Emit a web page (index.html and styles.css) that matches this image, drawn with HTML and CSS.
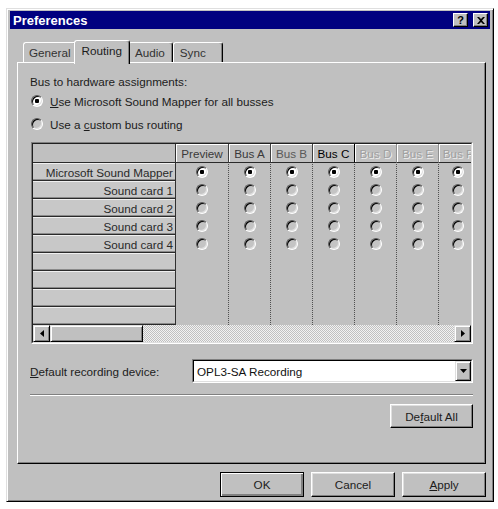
FILE: index.html
```html
<!DOCTYPE html>
<html lang="en">

<head>
    <meta charset="UTF-8">
    <meta name="viewport" content="width=device-width, initial-scale=1.0">
    <title>Preferences</title>
    <link rel="stylesheet" href="styles.css">
</head>

<body>
    <div class="dialog">
        <div class="titlebar">
            <span class="title">Preferences</span>
            <div class="title-buttons">
                <span class="tbtn help">?</span>
                <span class="tbtn">
                    <svg width="8" height="7" viewBox="0 0 8 7"><path d="M0 0h2l2 2 2-2h2L5 3.5 8 7H6L4 5 2 7H0l3-3.5z" fill="#000"/></svg>
                </span>
            </div>
        </div>

        <div class="tabs">
            <div class="tab">General</div>
            <div class="tab active">Routing</div>
            <div class="tab audio">Audio</div>
            <div class="tab sync">Sync</div>
        </div>

        <div class="panel">
            <div class="caption">Bus to hardware assignments:</div>
            <div class="option first"><span class="radio on"></span><span><u>U</u>se Microsoft Sound Mapper for all busses</span></div>
            <div class="option"><span class="radio"></span><span>Use a <u>c</u>ustom bus routing</span></div>

            <div class="routing">
                <div class="routing-inner">
                    <div class="routing-body">
                        <div class="names">
                            <div class="name head"></div>
                            <div class="name">Microsoft Sound Mapper</div>
                            <div class="name">Sound card 1</div>
                            <div class="name">Sound card 2</div>
                            <div class="name">Sound card 3</div>
                            <div class="name">Sound card 4</div>
                            <div class="name"></div>
                            <div class="name"></div>
                            <div class="name"></div>
                            <div class="name"></div>
                        </div>

                        <div class="bus preview">
                            <div class="bus-head">Preview</div>
                            <div class="cell"><span class="radio on"></span></div>
                            <div class="cell"><span class="radio"></span></div>
                            <div class="cell"><span class="radio"></span></div>
                            <div class="cell"><span class="radio"></span></div>
                            <div class="cell"><span class="radio"></span></div>
                        </div>
                        <div class="bus">
                            <div class="bus-head">Bus A</div>
                            <div class="cell"><span class="radio on"></span></div>
                            <div class="cell"><span class="radio"></span></div>
                            <div class="cell"><span class="radio"></span></div>
                            <div class="cell"><span class="radio"></span></div>
                            <div class="cell"><span class="radio"></span></div>
                        </div>
                        <div class="bus">
                            <div class="bus-head dim">Bus B</div>
                            <div class="cell"><span class="radio on"></span></div>
                            <div class="cell"><span class="radio"></span></div>
                            <div class="cell"><span class="radio"></span></div>
                            <div class="cell"><span class="radio"></span></div>
                            <div class="cell"><span class="radio"></span></div>
                        </div>
                        <div class="bus">
                            <div class="bus-head current">Bus C</div>
                            <div class="cell"><span class="radio on"></span></div>
                            <div class="cell"><span class="radio"></span></div>
                            <div class="cell"><span class="radio"></span></div>
                            <div class="cell"><span class="radio"></span></div>
                            <div class="cell"><span class="radio"></span></div>
                        </div>
                        <div class="bus">
                            <div class="bus-head off">Bus D</div>
                            <div class="cell"><span class="radio on"></span></div>
                            <div class="cell"><span class="radio"></span></div>
                            <div class="cell"><span class="radio"></span></div>
                            <div class="cell"><span class="radio"></span></div>
                            <div class="cell"><span class="radio"></span></div>
                        </div>
                        <div class="bus">
                            <div class="bus-head off">Bus E</div>
                            <div class="cell"><span class="radio on"></span></div>
                            <div class="cell"><span class="radio"></span></div>
                            <div class="cell"><span class="radio"></span></div>
                            <div class="cell"><span class="radio"></span></div>
                            <div class="cell"><span class="radio"></span></div>
                        </div>
                        <div class="bus last">
                            <div class="bus-head off">Bus F</div>
                            <div class="cell"><span class="radio on"></span></div>
                            <div class="cell"><span class="radio"></span></div>
                            <div class="cell"><span class="radio"></span></div>
                            <div class="cell"><span class="radio"></span></div>
                            <div class="cell"><span class="radio"></span></div>
                        </div>
                    </div>

                    <div class="hscroll">
                        <div class="sbtn">
                            <svg width="4" height="7" viewBox="0 0 4 7"><path d="M4 0v7L0 3.5z" fill="#000"/></svg>
                        </div>
                        <div class="thumb"></div>
                        <div class="track"></div>
                        <div class="sbtn">
                            <svg width="4" height="7" viewBox="0 0 4 7"><path d="M0 0v7l4-3.5z" fill="#000"/></svg>
                        </div>
                    </div>
                </div>
            </div>

            <div class="device-row">
                <span class="device-label"><u>D</u>efault recording device:</span>
                <div class="combo">
                    <div class="combo-inner">
                        <span class="combo-text">OPL3-SA Recording</span>
                        <span class="combo-btn">
                            <svg width="7" height="4" viewBox="0 0 7 4"><path d="M0 0h7L3.5 4z" fill="#000"/></svg>
                        </span>
                    </div>
                </div>
            </div>

            <div class="separator"></div>

            <div class="defaults">
                <button class="btn">De<u>f</u>ault All</button>
            </div>
        </div>

        <div class="footer">
            <button class="btn default">OK</button>
            <button class="btn">Cancel</button>
            <button class="btn"><u>A</u>pply</button>
        </div>
    </div>
</body>

</html>
```

FILE: styles.css
```css
body {
    margin: 0;
    background: #fff;
    font-family: "Liberation Sans", Arial, sans-serif;
    font-size: 11.7px;
    color: #1c1c1c;
}

u {
    text-decoration: underline;
    text-underline-offset: 1px;
}

.dialog {
    margin: 8px 0 0 6px;
    width: 488px;
    height: 494px;
    box-sizing: border-box;
    padding: 2px 3px;
    background: #c0c0c0;
    border: 1px solid;
    border-color: #dfdfdf #000 #000 #dfdfdf;
    box-shadow: inset 1px 1px #fff, inset -1px -1px #808080;
    display: flex;
    flex-direction: column;
}

/* title bar */
.titlebar {
    height: 18px;
    background: #000080;
    display: flex;
    align-items: center;
    justify-content: space-between;
    padding: 0 2px 0 3px;
}

.title {
    color: #fff;
    font-weight: bold;
    font-size: 13px;
}

.title-buttons {
    display: flex;
    gap: 5px;
}

.tbtn {
    width: 15px;
    height: 14px;
    box-sizing: border-box;
    background: #c0c0c0;
    border: 1px solid;
    border-color: #fff #000 #000 #fff;
    box-shadow: inset -1px -1px #808080;
    display: flex;
    align-items: center;
    justify-content: center;
    font-weight: bold;
    font-size: 11px;
    line-height: 1;
    color: #000;
}

/* tabs */
.tabs {
    display: flex;
    align-items: flex-end;
    margin: 11px 0 0 13px;
}

.tab {
    height: 20px;
    box-sizing: border-box;
    padding: 3px 5px 0;
    border: 1px solid;
    border-bottom: none;
    border-color: #fff #000 transparent #fff;
    border-radius: 3px 3px 0 0;
    box-shadow: inset -1px 0 #808080;
    color: #333;
}

.tab.active {
    height: 24px;
    margin: 0 -2px -2px -3px;
    padding: 3px 7px 0;
    background: #c0c0c0;
    position: relative;
    z-index: 1;
    color: #1c1c1c;
}

.tab.active + .tab {
    border-left-color: transparent;
}

.tab.audio {
    padding: 3px 7px 0 6px;
}

.tab.sync {
    padding: 3px 16px 0 6px;
}

/* panel */
.panel {
    margin: 0 4px 0 7px;
    padding: 12px 12px 35px;
    border: 1px solid;
    border-color: #fff #000 #000 #fff;
    box-shadow: inset -1px -1px #808080;
    display: flex;
    flex-direction: column;
}

.caption {
    line-height: 14px;
}

.option {
    display: flex;
    align-items: center;
    gap: 7px;
    height: 14px;
    margin-top: 9px;
    padding-left: 1px;
}

.option.first {
    margin-top: 5px;
}

.radio {
    width: 12px;
    height: 12px;
    box-sizing: border-box;
    border-radius: 50%;
    border: 1px solid;
    border-color: #5a5a5a #fff #fff #5a5a5a;
    box-shadow: inset 1px 1px #000, inset -1px -1px #e0e0e0;
    background: #c4c4c4;
    flex-shrink: 0;
}

.radio.on {
    background: radial-gradient(circle, #000 0 2px, #fff 2.5px);
}

/* routing grid */
.routing {
    margin: 11px 0 0 1px;
    width: 442px;
    box-sizing: border-box;
    border: 1px solid;
    border-color: #808080 #fff #fff #808080;
}

.routing-inner {
    border: 1px solid;
    border-color: #202020 #dfdfdf #dfdfdf #202020;
    overflow: hidden;
}

.routing-body {
    display: flex;
    height: 181px;
}

.names {
    width: 142px;
    flex-shrink: 0;
    border-right: 1px solid #303030;
}

.name {
    height: 18px;
    box-sizing: border-box;
    background: #c8c8c8;
    border-bottom: 1px solid #2a2a2a;
    box-shadow: inset 0 1px #f0f0f0, inset 0 -1px #8a8a8a;
    text-align: right;
    padding: 3px 2px 0 0;
    color: #2a2a2a;
    white-space: nowrap;
}

.name.head {
    height: 19px;
    background: #c0c0c0;
    box-shadow: none;
}

.bus {
    width: 41px;
    flex-shrink: 0;
    border-right: 1px dotted #505050;
}

.bus.preview {
    width: 52px;
}

.bus.last {
    width: 38px;
    border-right: none;
}

.bus-head {
    height: 19px;
    box-sizing: border-box;
    border-bottom: 1px solid #2a2a2a;
    margin-right: -1px;
    border-right: 1px solid #404040;
    box-shadow: inset 1px 1px #fff;
    text-align: center;
    padding-top: 3px;
    color: #3a3a3a;
    white-space: nowrap;
    overflow: hidden;
}

.bus-head.dim {
    color: #5a5a5a;
}

.bus-head.current {
    color: #000;
    border-right-color: #000;
}

.bus-head.off {
    color: #a0a0a0;
    text-shadow: 1px 1px #eee;
    border-right-color: #909090;
}

.cell {
    height: 18px;
    display: flex;
    align-items: center;
    justify-content: center;
}

.hscroll {
    display: flex;
    height: 17px;
}

.sbtn,
.thumb {
    box-sizing: border-box;
    background: #c0c0c0;
    border: 1px solid;
    border-color: #dfdfdf #000 #000 #dfdfdf;
    box-shadow: inset 1px 1px #fff, inset -1px -1px #808080;
}

.sbtn {
    width: 17px;
    display: flex;
    align-items: center;
    justify-content: center;
}

.thumb {
    width: 93px;
}

.track {
    flex: 1;
    background-color: #c0c0c0;
    background-image: repeating-conic-gradient(#f2f2f2 0 25%, #c0c0c0 0 50%);
    background-size: 2px 2px;
}

/* device */
.device-row {
    display: flex;
    align-items: center;
    margin-top: 15px;
}

.device-label {
    width: 162px;
}

.combo {
    width: 281px;
    height: 24px;
    box-sizing: border-box;
    border: 1px solid;
    border-color: #808080 #fff #fff #808080;
}

.combo-inner {
    height: 100%;
    box-sizing: border-box;
    border: 1px solid;
    border-color: #000 #dfdfdf #dfdfdf #000;
    background: #fff;
    display: flex;
    align-items: center;
}

.combo-text {
    flex: 1;
    padding-left: 3px;
    color: #111;
}

.combo-btn {
    width: 16px;
    height: 100%;
    box-sizing: border-box;
    background: #c0c0c0;
    border: 1px solid;
    border-color: #dfdfdf #000 #000 #dfdfdf;
    box-shadow: inset 1px 1px #fff, inset -1px -1px #808080;
    display: flex;
    align-items: center;
    justify-content: center;
}

.separator {
    margin-top: 11px;
    border-top: 1px solid #808080;
    border-bottom: 1px solid #fff;
    height: 0;
}

.defaults {
    display: flex;
    justify-content: flex-end;
    margin-top: 8px;
}

/* buttons */
.btn {
    width: 83px;
    height: 24px;
    background: #c0c0c0;
    border: 1px solid;
    border-color: #fff #000 #000 #fff;
    box-shadow: inset -1px -1px #808080, inset 1px 1px #dfdfdf;
    font-family: "Liberation Sans", Arial, sans-serif;
    font-size: 11.7px;
    color: #1c1c1c;
    padding: 0;
}

.btn.default {
    border-color: #000;
    box-shadow: inset 1px 1px #fff, inset -2px -2px #808080;
}

.footer {
    display: flex;
    justify-content: flex-end;
    gap: 7px;
    margin-top: 8px;
    padding-right: 4px;
}

.footer .btn {
    width: 84px;
    height: 25px;
}
```
